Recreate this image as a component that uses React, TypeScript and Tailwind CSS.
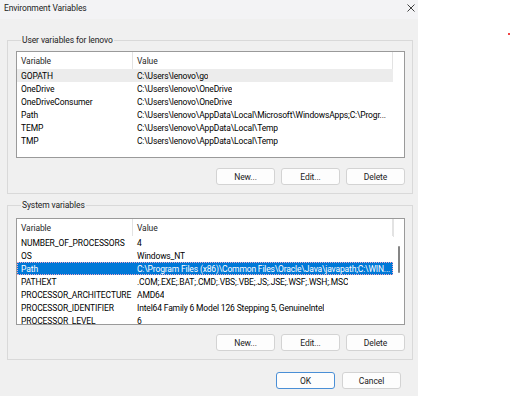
import React from "react";

type Row = { k: string; v: string };

const userRows: Row[] = [
  { k: "GOPATH", v: "C:\\Users\\lenovo\\go" },
  { k: "OneDrive", v: "C:\\Users\\lenovo\\OneDrive" },
  { k: "OneDriveConsumer", v: "C:\\Users\\lenovo\\OneDrive" },
  { k: "Path", v: "C:\\Users\\lenovo\\AppData\\Local\\Microsoft\\WindowsApps;C:\\Progr..." },
  { k: "TEMP", v: "C:\\Users\\lenovo\\AppData\\Local\\Temp" },
  { k: "TMP", v: "C:\\Users\\lenovo\\AppData\\Local\\Temp" },
];

const systemRows: Row[] = [
  { k: "NUMBER_OF_PROCESSORS", v: "4" },
  { k: "OS", v: "Windows_NT" },
  { k: "Path", v: "C:\\Program Files (x86)\\Common Files\\Oracle\\Java\\javapath;C:\\WIN..." },
  { k: "PATHEXT", v: ".COM;.EXE;.BAT;.CMD;.VBS;.VBE;.JS;.JSE;.WSF;.WSH;.MSC" },
  { k: "PROCESSOR_ARCHITECTURE", v: "AMD64" },
  { k: "PROCESSOR_IDENTIFIER", v: "Intel64 Family 6 Model 126 Stepping 5, GenuineIntel" },
  { k: "PROCESSOR_LEVEL", v: "6" },
];

function Btn({ label, primary }: { label: string; primary?: boolean }) {
  return (
    <button
      className={
        "flex h-[17px] w-[59px] items-center justify-center rounded-[3px] border bg-[#fdfdfd] text-[#1b1b1b] " +
        (primary ? "border-[#4a8fd6]" : "border-[#d3d3d3]")
      }
    >
      {label}
    </button>
  );
}

function VarList({
  rows,
  selected,
  active,
  scroll,
}: {
  rows: Row[];
  selected: number;
  active?: boolean;
  scroll?: boolean;
}) {
  return (
    <div className="flex h-[107px] overflow-hidden border border-[#9a9a9a] bg-white">
      <div className="flex w-[376px] flex-col">
        <div className="flex h-[17px] shrink-0 items-center border-r border-[#e3e3e3] text-[#1f1f1f]">
          <div className="flex h-full w-[116px] shrink-0 items-center border-r border-[#e3e3e3] pl-[4px]">
            Variable
          </div>
          <div className="pl-[4px]">Value</div>
        </div>
        {rows.map((r, i) => {
          const sel = i === selected;
          return (
            <div
              key={r.k}
              className={
                "flex h-[13px] shrink-0 items-center whitespace-nowrap " +
                (sel
                  ? active
                    ? "border border-dotted border-[#f2a6c6] bg-[#0078d7] text-white"
                    : "bg-[#ececec] text-black"
                  : "text-black")
              }
            >
              <div
                className={
                  "shrink-0 overflow-hidden " + (sel && active ? "w-[115px] pl-[3px]" : "w-[116px] pl-[4px]")
                }
              >
                {r.k}
              </div>
              <div className="min-w-0 overflow-hidden pl-[4px] tracking-[-0.16px]">{r.v}</div>
            </div>
          );
        })}
      </div>
      <div className="flex w-[11px] flex-col">
        {scroll ? (
          <>
            <div className="h-[18px] w-px bg-[#e3e3e3]" />
            <div className="ml-[5px] mt-[9px] h-[27px] w-[2px] rounded-full bg-[#858585]" />
          </>
        ) : null}
      </div>
    </div>
  );
}

export default function App() {
  return (
    <div className="flex h-[396px] w-[512px] bg-white font-['Segoe_UI','Roboto',sans-serif] text-[8.5px] leading-[12px] tracking-[-0.1px]">
      <div className="flex h-full w-[418px] flex-col bg-[#f0f0f0]">
        <div className="flex h-[19px] shrink-0 items-center justify-between bg-[#f3f3f5] pl-[4px] pr-[3px] pb-[3px] text-[#1b1b1b]">
          <span>Environment Variables</span>
          <svg viewBox="0 0 8 8" className="h-[8px] w-[8px]" fill="none" stroke="#2b2b2b" strokeWidth="0.9">
            <path d="M0.5 0.5l7 7M7.5 0.5l-7 7" />
          </svg>
        </div>

        <div className="flex flex-col pl-[7px] pr-[5px]">
          <fieldset className="mt-[15px] border border-[#d9d9d9] pl-[8px] pr-[7px] pb-[8px]">
            <legend className="ml-[5px] px-px text-[#1b1b1b]">User variables for lenovo</legend>
            <div className="mt-[5px]">
              <VarList rows={userRows} selected={0} />
            </div>
            <div className="mt-[10px] flex justify-end gap-[6px]">
              <Btn label="New..." />
              <Btn label="Edit..." />
              <Btn label="Delete" />
            </div>
          </fieldset>

          <fieldset className="mt-[5px] border border-[#d9d9d9] pl-[8px] pr-[7px] pb-[8px]">
            <legend className="ml-[5px] px-px text-[#1b1b1b]">System variables</legend>
            <div className="mt-[7px]">
              <VarList rows={systemRows} selected={2} active scroll />
            </div>
            <div className="mt-[9px] flex justify-end gap-[6px]">
              <Btn label="New..." />
              <Btn label="Edit..." />
              <Btn label="Delete" />
            </div>
          </fieldset>

          <div className="mr-[12px] mt-[12px] flex justify-end gap-[7px]">
            <Btn label="OK" primary />
            <Btn label="Cancel" />
          </div>
        </div>
      </div>

      <div className="flex-1 pl-[90px] pt-[33px]">
        <div className="h-[2px] w-[2px] bg-[#f04545]" />
      </div>
    </div>
  );
}
